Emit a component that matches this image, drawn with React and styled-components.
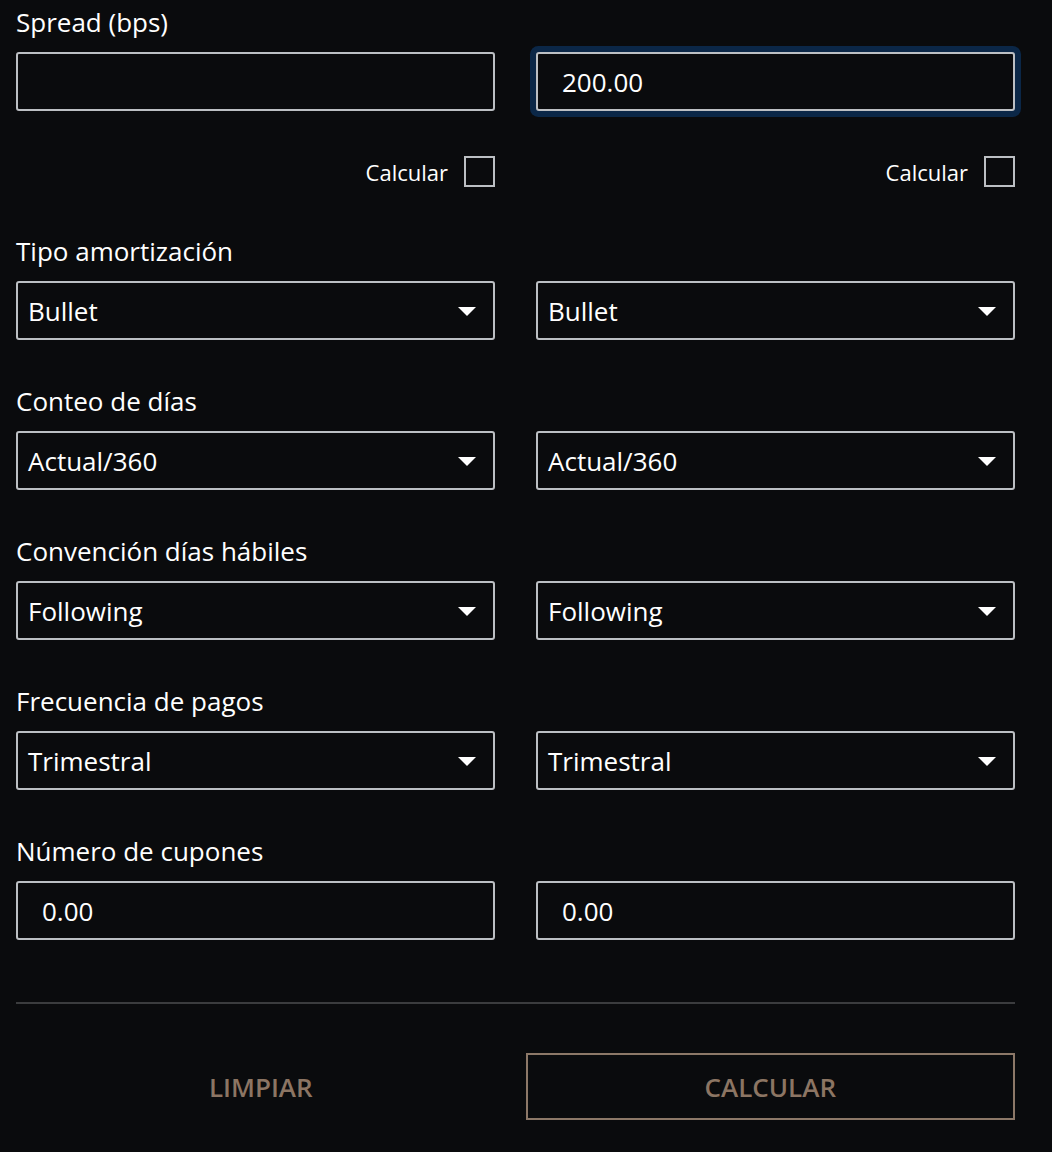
import React from 'react'
import styled, { createGlobalStyle } from 'styled-components'

const GlobalStyle = createGlobalStyle`
  html, body {
    margin: 0;
    background: #0a0b0d;
  }
  * { box-sizing: border-box; }
`

const Page = styled.div`
  padding: 7px 37px 32px 16px;
  font-family: "Open Sans", "Noto Sans", sans-serif;
  color: #fff;
  display: flex;
  flex-direction: column;
  gap: 46px;
`

const Section = styled.div`
  display: flex;
  flex-direction: column;
`

const Label = styled.div`
  font-size: 26px;
  line-height: 30px;
  margin-bottom: 15px;
`

const Pair = styled.div`
  display: grid;
  grid-template-columns: 1fr 1fr;
  column-gap: 41px;
`

const TextInput = styled.input`
  height: 59px;
  width: 100%;
  background: #0a0b0d;
  border: 2px solid #bcbfc3;
  border-radius: 3px;
  color: #fff;
  font-family: inherit;
  font-size: 26px;
  padding: 0 24px;
  outline: none;
  box-shadow: ${p => (p.$focused ? '0 0 0 6px #0b2747' : 'none')};
`

const SelectBox = styled.div`
  height: 59px;
  border: 2px solid #bcbfc3;
  border-radius: 3px;
  display: flex;
  align-items: center;
  justify-content: space-between;
  padding: 0 17px 0 10px;
  font-size: 26px;
`

const Arrow = styled.span`
  width: 0;
  height: 0;
  border-left: 9px solid transparent;
  border-right: 9px solid transparent;
  border-top: 9px solid #fff;
  margin-top: 2px;
`

const CheckRow = styled.div`
  display: flex;
  justify-content: flex-end;
  align-items: center;
  gap: 16px;
  margin-top: 45px;
  margin-bottom: 3px;
  font-size: 22px;
`

const Box = styled.span`
  width: 31px;
  height: 31px;
  border: 2px solid #bcbfc3;
`

const Divider = styled.hr`
  border: 0;
  height: 2px;
  background: #3b3c3e;
  margin: 16px 0 0;
`

const Actions = styled.div`
  display: grid;
  grid-template-columns: 1fr 1fr;
  column-gap: 20px;
  margin-top: 3px;
`

const Button = styled.button`
  height: 67px;
  background: transparent;
  border: 2px solid ${p => (p.$outlined ? '#8c7868' : 'transparent')};
  color: #8c7563;
  font-family: inherit;
  font-size: 26px;
  font-weight: 600;
  cursor: pointer;
`

const Select = ({ value }) => (
  <SelectBox>
    <span>{value}</span>
    <Arrow />
  </SelectBox>
)

const Check = () => (
  <CheckRow>
    <span>Calcular</span>
    <Box />
  </CheckRow>
)

const selects = [
  ['Tipo amortización', 'Bullet'],
  ['Conteo de días', 'Actual/360'],
  ['Convención días hábiles', 'Following'],
  ['Frecuencia de pagos', 'Trimestral'],
]

export default function App() {
  return (
    <>
      <GlobalStyle />
      <Page>
        <Section>
          <Label>Spread (bps)</Label>
          <Pair>
            <div>
              <TextInput defaultValue="" />
              <Check />
            </div>
            <div>
              <TextInput defaultValue="200.00" $focused />
              <Check />
            </div>
          </Pair>
        </Section>
        {selects.map(([label, value]) => (
          <Section key={label}>
            <Label>{label}</Label>
            <Pair>
              <Select value={value} />
              <Select value={value} />
            </Pair>
          </Section>
        ))}
        <Section>
          <Label>Número de cupones</Label>
          <Pair>
            <TextInput defaultValue="0.00" />
            <TextInput defaultValue="0.00" />
          </Pair>
        </Section>
        <Divider />
        <Actions>
          <Button>LIMPIAR</Button>
          <Button $outlined>CALCULAR</Button>
        </Actions>
      </Page>
    </>
  )
}
